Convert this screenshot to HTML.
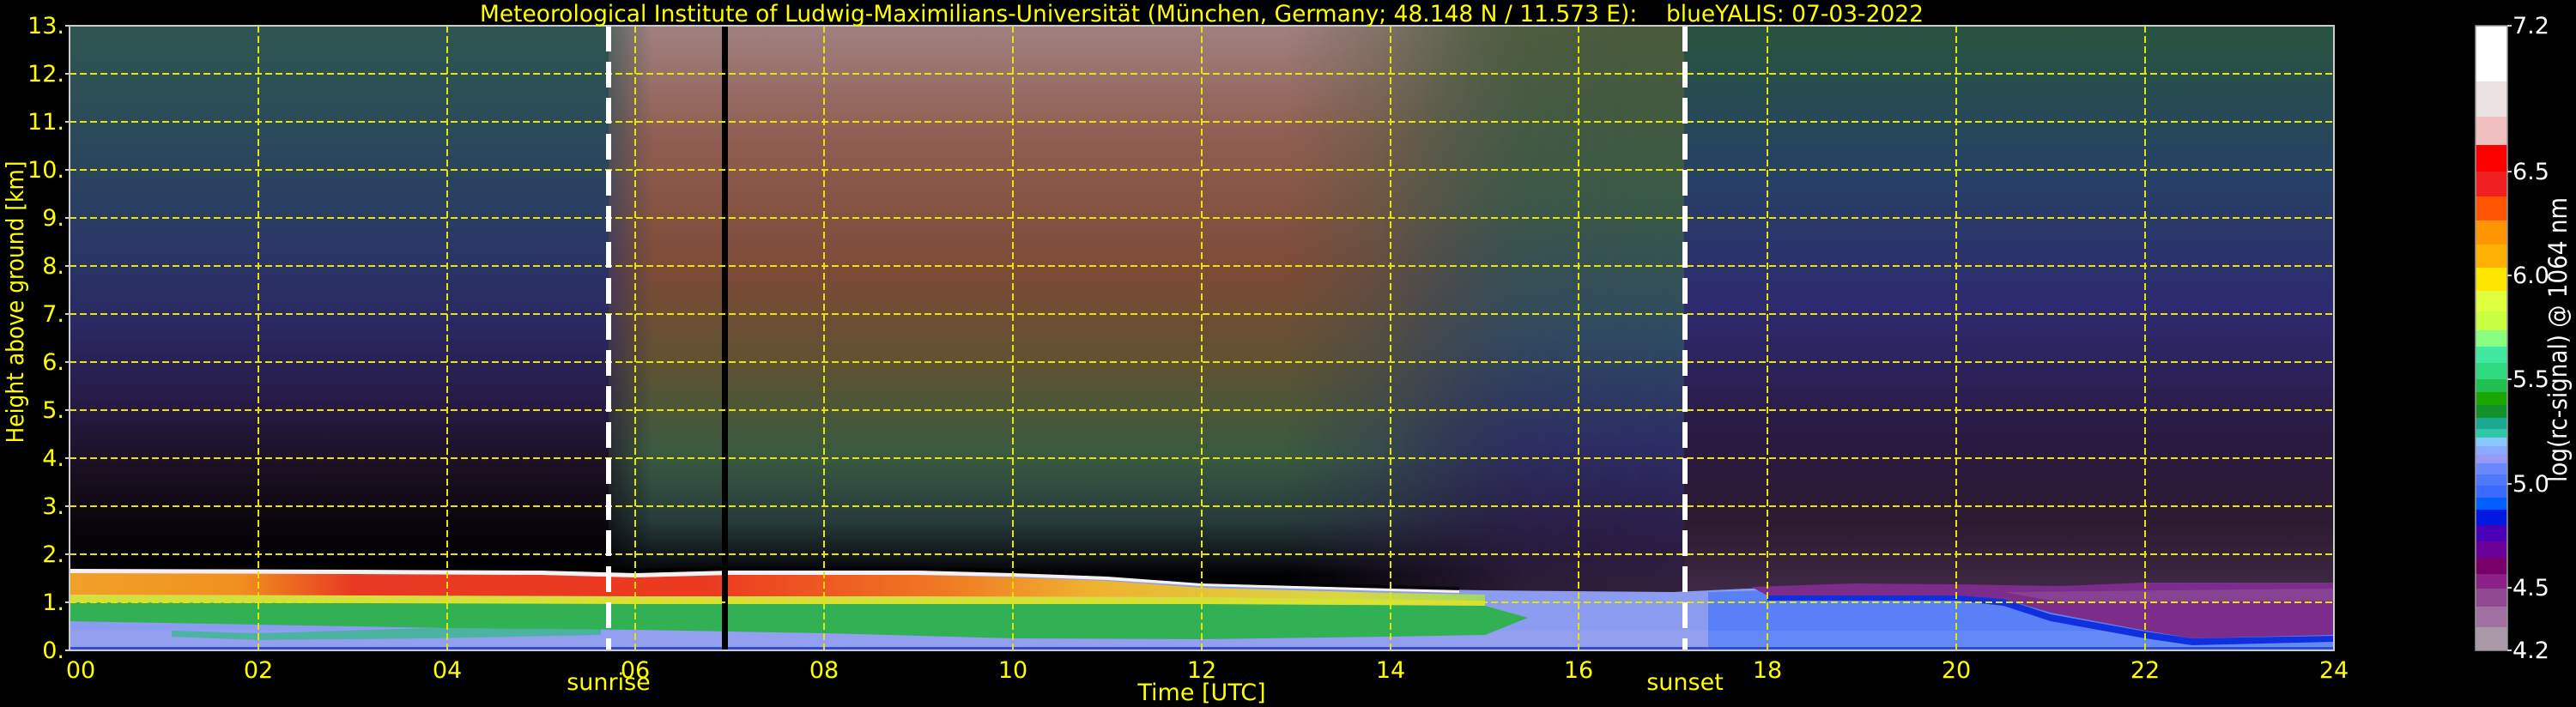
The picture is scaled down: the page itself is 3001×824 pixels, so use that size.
<!DOCTYPE html>
<html><head><meta charset="utf-8"><style>
html,body{margin:0;padding:0;background:#000;}
svg{display:block;}
text{font-family:"DejaVu Sans","Liberation Sans",sans-serif;}
</style></head><body>
<svg width="3001" height="824" viewBox="0 0 3001 824" xmlns="http://www.w3.org/2000/svg">
<defs>
<linearGradient id="gN" x1="0" y1="30" x2="0" y2="665" gradientUnits="userSpaceOnUse">
<stop offset="0" stop-color="#2e5650"/><stop offset="0.2" stop-color="#2a4a5a"/><stop offset="0.4" stop-color="#2a3866"/>
<stop offset="0.55" stop-color="#2a2862"/><stop offset="0.7" stop-color="#261a44"/><stop offset="0.82" stop-color="#1a0f20"/>
<stop offset="0.93" stop-color="#08040a"/><stop offset="1" stop-color="#000"/></linearGradient>
<linearGradient id="gE" x1="0" y1="30" x2="0" y2="685" gradientUnits="userSpaceOnUse">
<stop offset="0" stop-color="#28543e"/><stop offset="0.25" stop-color="#264264"/><stop offset="0.5" stop-color="#2e2a70"/>
<stop offset="0.72" stop-color="#2a1a44"/><stop offset="0.88" stop-color="#2c1a30"/><stop offset="1" stop-color="#3e2844"/></linearGradient>
<linearGradient id="gD" x1="0" y1="30" x2="0" y2="670" gradientUnits="userSpaceOnUse">
<stop offset="0" stop-color="#a08080"/><stop offset="0.2" stop-color="#905e52"/><stop offset="0.45" stop-color="#7c4a36"/>
<stop offset="0.62" stop-color="#5e5232"/><stop offset="0.78" stop-color="#3a5a40"/><stop offset="0.9" stop-color="#283c3c"/>
<stop offset="0.97" stop-color="#101418"/><stop offset="1" stop-color="#000"/></linearGradient>
<linearGradient id="gL" x1="0" y1="30" x2="0" y2="690" gradientUnits="userSpaceOnUse">
<stop offset="0" stop-color="#4a5a3a"/><stop offset="0.3" stop-color="#3a5a46"/><stop offset="0.55" stop-color="#2e4a62"/>
<stop offset="0.75" stop-color="#2c2c66"/><stop offset="0.92" stop-color="#2c1c44"/><stop offset="1" stop-color="#30203a"/></linearGradient>
<linearGradient id="mD" x1="709" y1="0" x2="1962" y2="0" gradientUnits="userSpaceOnUse">
<stop offset="0" stop-color="#fff" stop-opacity="0.35"/><stop offset="0.04" stop-color="#fff" stop-opacity="1"/>
<stop offset="0.72" stop-color="#fff" stop-opacity="1"/><stop offset="1" stop-color="#fff" stop-opacity="0.1"/></linearGradient>
<linearGradient id="mL" x1="1500" y1="0" x2="1962" y2="0" gradientUnits="userSpaceOnUse">
<stop offset="0" stop-color="#fff" stop-opacity="0"/><stop offset="0.6" stop-color="#fff" stop-opacity="0.9"/><stop offset="1" stop-color="#fff" stop-opacity="1"/></linearGradient>
<mask id="maskD"><rect x="709" y="30" width="1253" height="728" fill="url(#mD)"/></mask>
<mask id="maskL"><rect x="1500" y="30" width="462" height="728" fill="url(#mL)"/></mask>
<linearGradient id="gRed" x1="81" y1="0" x2="1730" y2="0" gradientUnits="userSpaceOnUse">
<stop offset="0" stop-color="#f0a028"/><stop offset="0.12" stop-color="#f09020"/><stop offset="0.2" stop-color="#e83a22"/>
<stop offset="0.45" stop-color="#ec3a20"/><stop offset="0.62" stop-color="#f07a22"/><stop offset="0.72" stop-color="#f0b030"/>
<stop offset="0.9" stop-color="#d8d840"/><stop offset="1" stop-color="#a0d860"/></linearGradient>
</defs>

<rect x="81" y="30" width="1881" height="728" fill="url(#gN)"/>
<rect x="1962" y="30" width="757" height="728" fill="url(#gE)"/>
<rect x="709" y="30" width="1253" height="728" fill="url(#gD)" mask="url(#maskD)"/>
<rect x="1500" y="30" width="462" height="728" fill="url(#gL)" mask="url(#maskL)"/>

<path d="M81 663 L411 664 L631 665 L740 668 L850 665 L1070 665 L1180 668 L1290 672 L1400 680 L1510 683 L1620 686 L1730 688 L1949 690 L2059 685 L2719 682 L2719 758 L81 758Z" fill="#8c9cf0"/>
<path d="M81 735 L2719 735 L2719 758 L81 758Z" fill="#9aa2f0" opacity="0.6"/>
<path d="M1990 690 L2059 688 L2279 688 L2719 686 L2719 758 L1990 758Z" fill="#5a80f8"/>
<path d="M1990 735 L2719 735 L2719 758 L1990 758Z" fill="#6a8cf6" opacity="0.7"/>
<path d="M2059 690 L2279 690 L2334 698 L2389 716 L2499 736 L2554 744 L2719 741 L2719 748 L2554 752 L2499 744 L2389 724 L2334 706 L2279 700 L2059 700Z" fill="#1030e0"/>
<path d="M2040 684 L2160 680 L2279 681 L2400 683 L2500 679 L2719 679 L2719 740 L2554 744 L2499 735 L2389 714 L2334 698 L2279 694 L2059 694Z" fill="#7c2c8a"/>
<path d="M2334 690 L2719 686 L2719 700 L2400 702Z" fill="#8c4c98" opacity="0.7"/>
<path d="M200 735 L300 738 L500 732 L700 728 L700 740 L500 744 L300 746 L200 742Z" fill="#3ab890" opacity="0.8"/>
<path d="M81 702 L411 700 L740 702 L1070 700 L1400 702 L1620 703 L1730 706 L1780 720 L1730 740 L1620 742 L1400 745 L1180 744 L960 738 L740 734 L521 732 L301 728 L81 724Z" fill="#32b054"/>
<path d="M81 692 L740 694 L1070 694 L1400 695 L1620 698 L1730 700 L1730 706 L1400 704 L1070 704 L740 704 L81 702Z" fill="#d4e040"/>
<path d="M81 668 L411 669 L631 670 L740 673 L850 670 L1070 670 L1180 673 L1290 677 L1400 685 L1510 688 L1620 691 L1730 693 L1730 700 L1400 696 L1070 695 L740 695 L81 693Z" fill="url(#gRed)"/>
<path d="M81 663 L411 664 L631 665 L740 668 L850 665 L1070 665 L1180 668 L1290 672 L1400 680 L1510 683 L1620 686 L1700 688 L1700 691 L1620 689 L1510 686 L1400 683 L1290 676 L1180 672 L1070 670 L850 670 L740 673 L631 670 L411 669 L81 668Z" fill="#f6f0f0"/>
<path d="M81 658 L411 659 L631 660 L740 663 L850 660 L1070 660 L1180 663 L1290 667 L1400 676 L1510 679 L1620 682 L1700 684 L1700 688 L1620 686 L1510 683 L1400 680 L1290 672 L1180 668 L1070 665 L850 665 L740 668 L631 665 L411 664 L81 663Z" fill="#000" opacity="0.6"/>
<rect x="81" y="754" width="2638" height="4" fill="#3050d0"/>

<rect x="841" y="30" width="7" height="728" fill="#000"/>

<g stroke="#e6e600" stroke-width="2" stroke-dasharray="8 4" fill="none">
<path d="M81 86H2719M81 142H2719M81 198H2719M81 254H2719M81 310H2719M81 366H2719M81 422H2719M81 478H2719M81 534H2719M81 590H2719M81 646H2719M81 702H2719"/>
<path d="M301 30V758M521 30V758M740 30V758M960 30V758M1180 30V758M1400 30V758M1620 30V758M1839 30V758M2059 30V758M2279 30V758M2499 30V758"/>
</g>
<g stroke="#fff" stroke-width="6" stroke-dasharray="30 12">
<path d="M709 30V758"/><path d="M1963 30V758"/>
</g>
<rect x="81" y="30" width="2638" height="728" fill="none" stroke="#cccccc" stroke-width="2"/>
<g stroke="#ccc" stroke-width="2"><path d="M76 30h5M76 86h5M76 142h5M76 198h5M76 254h5M76 310h5M76 366h5M76 422h5M76 478h5M76 534h5M76 590h5M76 646h5M76 702h5M76 758h5"/></g>

<text x="1400" y="25" fill="#ffff00" font-size="27" text-anchor="middle" textLength="1682" lengthAdjust="spacingAndGlyphs">Meteorological Institute of Ludwig-Maximilians-Universität (München, Germany; 48.148 N / 11.573 E):&#160;&#160;&#160;&#160;blueYALIS: 07-03-2022</text>

<g fill="#ffff00" font-size="27" text-anchor="end">
<text x="75" y="39">13.</text><text x="75" y="95">12.</text><text x="75" y="151">11.</text><text x="75" y="207">10.</text>
<text x="75" y="263">9.</text><text x="75" y="319">8.</text><text x="75" y="375">7.</text><text x="75" y="431">6.</text>
<text x="75" y="487">5.</text><text x="75" y="543">4.</text><text x="75" y="599">3.</text><text x="75" y="655">2.</text>
<text x="75" y="711">1.</text><text x="75" y="767">0.</text>
</g>
<text transform="translate(27,352) rotate(-90)" fill="#ffff00" font-size="28" text-anchor="middle" textLength="329" lengthAdjust="spacingAndGlyphs">Height above ground [km]</text>

<g fill="#ffff00" font-size="27" text-anchor="middle">
<text x="94" y="790">00</text><text x="301" y="790">02</text><text x="521" y="790">04</text><text x="740" y="790">06</text>
<text x="960" y="790">08</text><text x="1180" y="790">10</text><text x="1400" y="790">12</text><text x="1620" y="790">14</text>
<text x="1839" y="790">16</text><text x="2059" y="790">18</text><text x="2279" y="790">20</text><text x="2499" y="790">22</text>
<text x="2719" y="790">24</text>
<text x="709" y="804">sunrise</text><text x="1963" y="804">sunset</text>
<text x="1400" y="816">Time [UTC]</text>
</g>

<g>
<rect x="2884" y="30" width="37" height="65" fill="#ffffff"/>
<rect x="2884" y="95" width="37" height="41" fill="#ebe1e1"/>
<rect x="2884" y="136" width="37" height="33" fill="#f0c0c0"/>
<rect x="2884" y="169" width="37" height="31" fill="#ff0000"/>
<rect x="2884" y="200" width="37" height="29" fill="#f02020"/>
<rect x="2884" y="229" width="37" height="28" fill="#ff5500"/>
<rect x="2884" y="257" width="37" height="28" fill="#ff9500"/>
<rect x="2884" y="285" width="37" height="27" fill="#ffb000"/>
<rect x="2884" y="312" width="37" height="27" fill="#ffe600"/>
<rect x="2884" y="339" width="37" height="24" fill="#e0ff40"/>
<rect x="2884" y="363" width="37" height="22" fill="#c8ff40"/>
<rect x="2884" y="385" width="37" height="19" fill="#88ff80"/>
<rect x="2884" y="404" width="37" height="19" fill="#40e8a0"/>
<rect x="2884" y="423" width="37" height="19" fill="#30d880"/>
<rect x="2884" y="442" width="37" height="15" fill="#20c050"/>
<rect x="2884" y="457" width="37" height="15" fill="#1aa800"/>
<rect x="2884" y="472" width="37" height="15" fill="#12902a"/>
<rect x="2884" y="487" width="37" height="13" fill="#1aa890"/>
<rect x="2884" y="500" width="37" height="10" fill="#2ec8a8"/>
<rect x="2884" y="510" width="37" height="10" fill="#88c8ff"/>
<rect x="2884" y="520" width="37" height="10" fill="#88aaff"/>
<rect x="2884" y="530" width="37" height="10" fill="#9898f8"/>
<rect x="2884" y="540" width="37" height="13" fill="#6a88ff"/>
<rect x="2884" y="553" width="37" height="13" fill="#5078ff"/>
<rect x="2884" y="566" width="37" height="14" fill="#3a6aff"/>
<rect x="2884" y="580" width="37" height="14" fill="#0060ff"/>
<rect x="2884" y="594" width="37" height="18" fill="#0018e0"/>
<rect x="2884" y="612" width="37" height="19" fill="#4a00b8"/>
<rect x="2884" y="631" width="37" height="19" fill="#6a0098"/>
<rect x="2884" y="650" width="37" height="19" fill="#780068"/>
<rect x="2884" y="669" width="37" height="17" fill="#8a2088"/>
<rect x="2884" y="686" width="37" height="21" fill="#904890"/>
<rect x="2884" y="707" width="37" height="24" fill="#a070a0"/>
<rect x="2884" y="731" width="37" height="27" fill="#a898a8"/>
<rect x="2884" y="30" width="37" height="728" fill="none" stroke="#999" stroke-width="1.5"/>
<g stroke="#ccc" stroke-width="2"><path d="M2921 30h5M2921 200h5M2921 321h5M2921 442h5M2921 564h5M2921 685h5M2921 758h5"/></g>
</g>
<g fill="#ffffff" font-size="27">
<text x="2927" y="39">7.2</text><text x="2927" y="209">6.5</text><text x="2927" y="330">6.0</text>
<text x="2927" y="451">5.5</text><text x="2927" y="573">5.0</text><text x="2927" y="694">4.5</text><text x="2927" y="767">4.2</text>
</g>
<text transform="translate(2990,396) rotate(-90)" fill="#ffffff" font-size="29" text-anchor="middle" textLength="332" lengthAdjust="spacingAndGlyphs">log(rc-signal) @ 1064 nm</text>
</svg>
</body></html>
